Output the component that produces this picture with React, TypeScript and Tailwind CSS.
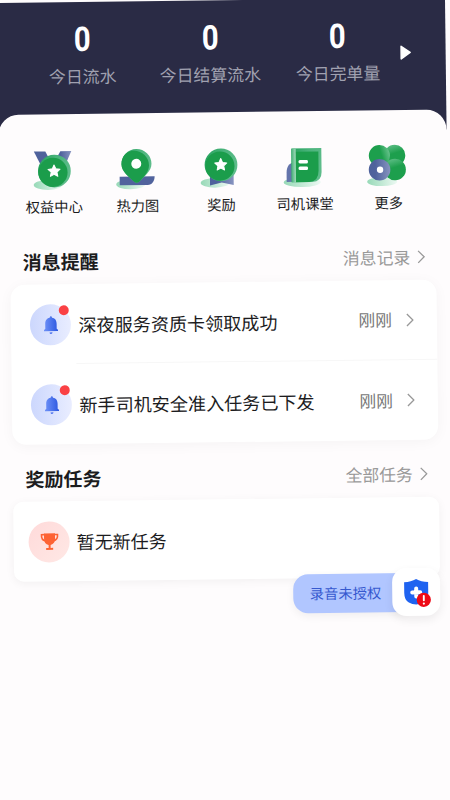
import React from 'react';

const Star: React.FC<{ cx: number; cy: number }> = ({ cx, cy }) => (
    <path
        transform={`translate(${cx} ${cy})`}
        d="M0-6 1.8-2.1 6-1.6 2.9 1.3 3.7 5.4 0 3.4-3.7 5.4-2.9 1.3-6-1.6-1.8-2.1Z"
        fill="#fff"
        stroke="#fff"
        strokeWidth="1"
        strokeLinejoin="round"
    />
);

// Shared gradients for the shortcut icons
const Gradients: React.FC = () => (
    <svg width="0" height="0" className="absolute">
        <defs>
            <linearGradient id="shade" x1="0" x2="1">
                <stop offset="0" stopColor="#97d9b7" />
                <stop offset="1" stopColor="#edf9f3" />
            </linearGradient>
            <linearGradient id="rim" x1="0" x2="1" y1="0" y2="0.4">
                <stop offset="0" stopColor="#22a05a" />
                <stop offset="0.5" stopColor="#48b27a" />
                <stop offset="1" stopColor="#5dbc8a" />
            </linearGradient>
            <linearGradient id="leaf" x1="0" x2="1" y1="0.3" y2="0">
                <stop offset="0.5" stopColor="#1d9f4d" />
                <stop offset="1" stopColor="#7ccc9e" />
            </linearGradient>
            <linearGradient id="leafTop" x1="0.3" x2="0" y1="1" y2="0">
                <stop offset="0.5" stopColor="#1d9f4d" />
                <stop offset="1" stopColor="#6bc492" />
            </linearGradient>
            <linearGradient id="navy" x1="0" x2="1">
                <stop offset="0.3" stopColor="#4f629c" />
                <stop offset="1" stopColor="#8794c0" />
            </linearGradient>
            <linearGradient id="spine" x1="0" x2="1">
                <stop offset="0" stopColor="#45b077" />
                <stop offset="1" stopColor="#a3dabd" />
            </linearGradient>
            <linearGradient id="bell" x1="0" x2="1">
                <stop offset="0" stopColor="#6f92f8" />
                <stop offset="1" stopColor="#2c57e0" />
            </linearGradient>
        </defs>
    </svg>
);

const MedalIcon = () => (
    <svg width="48" height="48" viewBox="0 0 48 48">
        <ellipse cx="18" cy="36.5" rx="14.5" ry="5" fill="url(#shade)" />
        <path d="M4 3H15.5L21 14 11 17Z" fill="#4f629c" />
        <path d="M30.5 3H41.5L36.5 14 26 11Z" fill="url(#navy)" />
        <circle cx="24.3" cy="22.8" r="16.4" fill="url(#rim)" />
        <circle cx="22.9" cy="24" r="14.6" fill="#1b9d4b" />
        <Star cx={24} cy={22.6} />
    </svg>
);

const PinIcon = () => (
    <svg width="48" height="48" viewBox="0 0 48 48">
        <ellipse cx="17.5" cy="37" rx="14.5" ry="4.8" fill="url(#shade)" />
        <path d="M6.5 29.2H41.5C41.5 34 39 37.8 34.5 37.8H6.5Z" fill="#51639d" />
        <path d="M23.5 1.7A15 15 0 0 1 38.5 16.7C38.5 24 31 29.5 26 34.5Q23.5 36.5 21 34.5C16 29.5 8.5 24 8.5 16.7A15 15 0 0 1 23.5 1.7Z" fill="url(#rim)" />
        <path d="M20 3.5C29 3 36 10 36 18C36 25 30 30 26 34.5Q23.5 36.5 21 34.5C16 29.5 8.5 24 8.5 16.7C8.5 10 13 4 20 3.5Z" fill="#1b9d4b" />
        <circle cx="23.3" cy="16.5" r="5" fill="#fff" />
    </svg>
);

const AwardIcon = () => (
    <svg width="48" height="48" viewBox="0 0 48 48">
        <ellipse cx="18" cy="36.5" rx="14.5" ry="4.8" fill="url(#shade)" />
        <path d="M12.8 27H36.5V39L24.5 36.2 12.8 39Z" fill="url(#navy)" />
        <circle cx="24" cy="18.6" r="16.4" fill="url(#rim)" />
        <circle cx="22.9" cy="19.8" r="14.6" fill="#1b9d4b" />
        <Star cx={23.8} cy={18.3} />
    </svg>
);

const BookIcon = () => (
    <svg width="48" height="48" viewBox="0 0 48 48">
        <ellipse cx="21" cy="37" rx="18.5" ry="4.8" fill="url(#shade)" />
        <path d="M14 17C8 17 5.5 22 5.5 27V36.5H14Z" fill="#6474ab" />
        <path d="M10.5 3H40.5V27Q40.5 36.8 31 36.8H10.5Z" fill="url(#rim)" />
        <path d="M14.5 6.5H37.5V25.5Q37.5 36.5 28 36.8H14.5Z" fill="#1b9d4b" />
        <path d="M10.5 3.5H14.8V36.8H10.5Z" fill="url(#spine)" />
        <rect x="17.5" y="14.7" width="9.5" height="3.5" rx="1.5" fill="#fff" />
        <rect x="17.5" y="21.3" width="9.5" height="3.5" rx="1.5" fill="#fff" />
    </svg>
);

const MoreIcon = () => (
    <svg width="48" height="48" viewBox="0 0 48 48">
        <ellipse cx="18" cy="37.3" rx="15" ry="4.5" fill="url(#shade)" />
        <circle cx="30.8" cy="11.2" r="10.6" fill="url(#leafTop)" />
        <circle cx="15.5" cy="11.2" r="10.6" fill="url(#leaf)" />
        <circle cx="31" cy="25.4" r="10.8" fill="url(#leafTop)" />
        <circle cx="15.5" cy="25.4" r="10.8" fill="url(#navy)" />
        <circle cx="16" cy="25.4" r="3.2" fill="#fff" />
    </svg>
);

const ChevronRight = () => (
    <svg width="8" height="14" viewBox="0 0 8 14" fill="none" stroke="#999" strokeWidth="1.3">
        <path d="M1 1 7 7 1 13" />
    </svg>
);

const stats = [
    { value: '0', label: '今日流水' },
    { value: '0', label: '今日结算流水' },
    { value: '0', label: '今日完单量' },
];

const shortcuts = [
    { label: '权益中心', icon: <MedalIcon /> },
    { label: '热力图', icon: <PinIcon /> },
    { label: '奖励', icon: <AwardIcon /> },
    { label: '司机课堂', icon: <BookIcon /> },
    { label: '更多', icon: <MoreIcon /> },
];

const messages = [
    { title: '深夜服务资质卡领取成功', time: '刚刚' },
    { title: '新手司机安全准入任务已下发', time: '刚刚' },
];

const SectionHeader: React.FC<{ title: string; link: string }> = ({ title, link }) => (
    <div className="flex h-7 items-center justify-between pl-[22.5px] pr-[22.5px]">
        <h2 className="pb-px text-[19px] font-bold text-[#1c1c1e]">{title}</h2>
        <div className="flex items-center gap-[7px] text-[16.8px] text-[#999]">
            <span>{link}</span>
            <ChevronRight />
        </div>
    </div>
);

const MessageRow: React.FC<{ title: string; time: string; divider: boolean }> = ({ title, time, divider }) => (
    <div className="flex h-20 pl-[19px]">
        <div className="relative mr-[4.5px] flex size-[41px] shrink-0 self-center items-center justify-center rounded-full bg-linear-to-r from-[#ccd7fd] to-[#e9edff]">
            <svg width="16" height="20" viewBox="0 0 16 20" className="mt-px">
                <path d="M8 1Q9 1 9.2 2.4C12.5 3 13.7 5.5 13.7 8.5V13.5L15 14.5V15.8H1V14.5L2.3 13.5V8.5C2.3 5.5 3.5 3 6.8 2.4Q7 1 8 1Z" fill="url(#bell)" />
                <path d="M6.5 17H9.5Q9.3 18.6 8 18.6T6.5 17Z" fill="#4c72ee" />
            </svg>
            <span className="absolute right-[2px] top-[1px] size-[10px] rounded-full bg-[#fa4145]" />
        </div>
        <div className={`flex flex-1 items-center pl-[3px] pr-[23px] ${divider ? 'border-b border-[#f7f7f7]' : ''}`}>
            <span className="flex-1 whitespace-nowrap text-[18.1px] text-[#1c1c1e]">{title}</span>
            <span className="mr-[14px] text-[16.8px] text-[#777]">{time}</span>
            <ChevronRight />
        </div>
    </div>
);

const App: React.FC = () => (
    <div className="h-[800px] w-[450px] overflow-hidden bg-[#fefcfd] pt-[3px] font-['Noto_Sans_CJK_SC',sans-serif] leading-none">
        <Gradients />
        <div className="-ml-[3px] w-[447.5px] origin-top-left -rotate-[0.7deg]">
            <header className="-mb-5 flex h-[132px] bg-[#2a2b45] pl-[21px]">
                <div className="grid w-[383px] shrink-0 grid-cols-3">
                    {stats.map((s) => (
                        <div key={s.label} className="flex flex-col items-center pt-[20.5px]">
                            <span className="h-[33px] scale-x-[0.86] font-[Roboto,sans-serif] text-[34px] font-bold leading-[33px] text-white">{s.value}</span>
                            <span className="mt-[12px] whitespace-nowrap text-[16.9px] text-[#a0a1b0]">{s.label}</span>
                        </div>
                    ))}
                </div>
                <svg width="12" height="15" viewBox="0 0 12 15" className="-ml-[2px] mt-[47px] shrink-0">
                    <path d="M1.5 1.2 10.5 7.5 1.5 13.8Z" fill="#fff" stroke="#fff" strokeWidth="1.5" strokeLinejoin="round" />
                </svg>
            </header>

            <main className="relative h-[740px] rounded-t-[20px] bg-[#fefcfd] pt-[34px]">
                <nav className="ml-[13px] grid w-[418px] grid-cols-5">
                    {shortcuts.map((s) => (
                        <div key={s.label} className="flex flex-col items-center">
                            {s.icon}
                            <span className="mt-[3px] text-[14.3px] text-[#1c1c1e]">{s.label}</span>
                        </div>
                    ))}
                </nav>

                <section className="mt-[34px]">
                    <SectionHeader title="消息提醒" link="消息记录" />
                    <div className="ml-[10px] mt-[9px] w-[426px] rounded-[14px] bg-white shadow-[0_2px_14px_rgba(0,0,0,0.04)]">
                        {messages.map((m, i) => (
                            <MessageRow key={m.title} title={m.title} time={m.time} divider={i < messages.length - 1} />
                        ))}
                    </div>
                </section>

                <section className="mt-[20px]">
                    <SectionHeader title="奖励任务" link="全部任务" />
                    <div className="ml-[10px] mt-[9px] flex h-20 w-[426px] items-center rounded-[10px] bg-white pl-[15px] shadow-[0_2px_10px_rgba(0,0,0,0.05)]">
                        <div className="flex size-[41px] items-center justify-center rounded-full bg-linear-to-br from-[#ffdada] to-[#ffe8e5]">
                            <svg width="20" height="20" viewBox="0 0 20 20" fill="none">
                                <path d="M5 3.2H2Q1.5 8.5 6.2 9.5M15 3.2H18Q18.5 8.5 13.8 9.5" stroke="#fd6334" strokeWidth="1.6" />
                                <path d="M4.5 2H15.5V7.5Q15.5 12.5 11 13.5V16.5H13.5V18.5H6.5V16.5H9V13.5Q4.5 12.5 4.5 7.5Z" fill="#fd6334" />
                            </svg>
                        </div>
                        <span className="ml-[7px] text-[18px] text-[#1c1c1e]">暂无新任务</span>
                    </div>
                </section>

                {/* Floating safety badge */}
                <div className="absolute left-[288.5px] top-[458px] flex items-center">
                    <div className="flex h-[39px] w-[112px] items-center rounded-l-[15px] bg-[#b1c6ff] pl-[17px] text-[14.3px] text-[#3659cf] shadow-[0_3px_8px_rgba(0,0,0,0.06)]">
                        录音未授权
                    </div>
                    <div className="-ml-[13px] flex size-[48px] items-center justify-center rounded-[14px] bg-white shadow-[0_4px_10px_rgba(0,0,0,0.07)]">
                        <svg width="32" height="32" viewBox="0 0 32 32">
                            <path d="M16 3Q21 6 28 6.2V17Q28 24 23.5 26.5Q20 28.5 16 28.5T8.5 26.5Q4 24 4 17V6.2Q11 6 16 3Z" fill="#1f63f0" />
                            <path d="M16 12.5V20.5M12 16.5H20" stroke="#fff" strokeWidth="4" strokeLinecap="round" />
                            <circle cx="23.5" cy="24" r="7.1" fill="#ee0a16" />
                            <path d="M23.5 20V24.5" stroke="#fff" strokeWidth="1.9" strokeLinecap="round" />
                            <circle cx="23.5" cy="27.7" r="1.1" fill="#fff" />
                        </svg>
                    </div>
                </div>
            </main>
        </div>
    </div>
);

export default App;
